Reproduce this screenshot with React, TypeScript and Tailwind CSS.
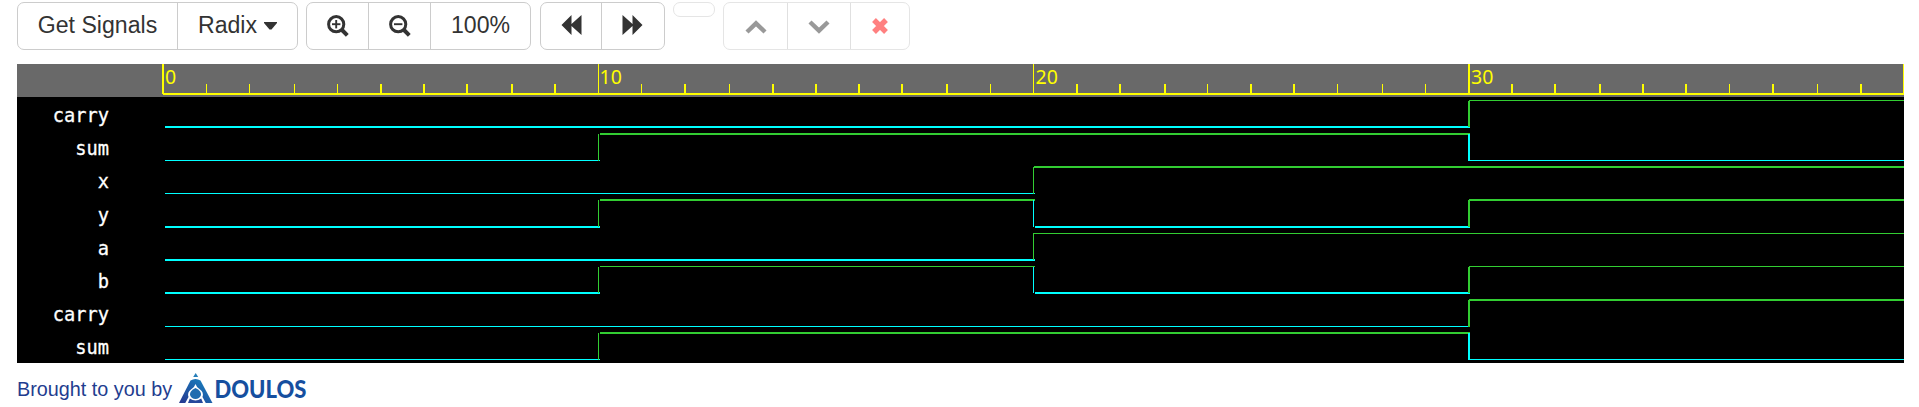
import React from "react";

const GREEN = "#32cd32";
const CYAN = "#00ffff";

type Wave = { name: string; low: [number, number]; high: [number, number]; levels: [number, number, number, number] };

const waves: Wave[] = [
  { name: "carry", low: [126, 2], high: [100, 1], levels: [0, 0, 0, 1] },
  { name: "sum", low: [160, 1], high: [133, 2], levels: [0, 1, 1, 0] },
  { name: "x", low: [193, 1], high: [166, 2], levels: [0, 0, 1, 1] },
  { name: "y", low: [226, 2], high: [199, 2], levels: [0, 1, 0, 1] },
  { name: "a", low: [259, 2], high: [233, 1], levels: [0, 0, 1, 1] },
  { name: "b", low: [292, 2], high: [266, 1], levels: [0, 1, 0, 1] },
  { name: "carry", low: [326, 1], high: [299, 2], levels: [0, 0, 0, 1] },
  { name: "sum", low: [359, 1], high: [332, 2], levels: [0, 1, 1, 0] },
];

const starts = [165, 600, 1034, 1469];
const ends = [600, 1035, 1470, 1904];
const edges: [number, number][] = [[162, 2], [598, 1], [1033, 1], [1468, 2]];

const ticks: [number, number][] = [
  [206, 1], [249, 1], [294, 1], [337, 1], [380, 2], [423, 2], [466, 2], [511, 2], [554, 2],
  [641, 1], [684, 2], [729, 1], [772, 2], [815, 2], [858, 2], [901, 2], [946, 2], [990, 1],
  [1076, 2], [1119, 2], [1164, 2], [1207, 1], [1250, 2], [1293, 2], [1337, 1], [1382, 1], [1425, 1],
  [1511, 2], [1554, 2], [1599, 2], [1642, 2], [1685, 2], [1729, 1], [1772, 2], [1817, 1], [1860, 2],
];

function Trace({ wave }: { wave: Wave }) {
  const { low, high, levels } = wave;
  return (
    <g>
      {levels.map((level, i) => {
        if (i > 0 && level === levels[i - 1]) return null;
        let last = i;
        while (last < 3 && levels[last + 1] === level) last++;
        const [y, h] = level ? high : low;
        const x = i === 2 && !level ? 1035 : i === 2 && high[1] === 1 ? 1033 : starts[i];
        const color = level ? GREEN : CYAN;
        return (
          <g key={i} fill={color}>
            <rect x={x} y={y} width={ends[last] - x} height={h} />
            {i > 0 && (
              <rect x={edges[i][0]} y={high[0] + 1} width={edges[i][1]} height={low[0] - high[0]} />
            )}
          </g>
        );
      })}
    </g>
  );
}

function Magnifier({ plus = false }: { plus?: boolean }) {
  return (
    <svg width="22" height="22" viewBox="0 0 22 22" fill="none" stroke="currentColor">
      <circle cx="9.2" cy="9.2" r="7.6" strokeWidth="3" />
      <path d="M15 15L20.3 20.3" strokeWidth="4" />
      <path d="M5 9.2H13.4" strokeWidth="1.9" />
      {plus && <path d="M9.2 5V13.4" strokeWidth="1.9" />}
    </svg>
  );
}

function Skip({ forward = false }: { forward?: boolean }) {
  return (
    <svg width="21" height="20" viewBox="0 0 21 20" fill="currentColor" className="-mt-[2px]">
      <path d={forward ? "M0.5 0L10.5 9V0L20.5 10L10.5 20V11L0.5 20Z" : "M20.5 0L10.5 9V0L0.5 10L10.5 20V11L20.5 20Z"} />
    </svg>
  );
}

function Chevron({ down = false }: { down?: boolean }) {
  return (
    <svg width="22" height="14" viewBox="0 0 22 14" fill="none" stroke="currentColor" strokeWidth="4.4" className={down ? "mt-[2px]" : "mt-px"}>
      <path d={down ? "M2 2L11 10.6L20 2" : "M2 12L11 3.4L20 12"} />
    </svg>
  );
}

function Group({ className, children }: { className: string; children: React.ReactNode }) {
  return <div className={`flex h-12 divide-x rounded-[7px] border ${className}`}>{children}</div>;
}

function Button({ className, children }: { className: string; children: React.ReactNode }) {
  return <button className={`flex h-full shrink-0 items-center justify-center ${className}`}>{children}</button>;
}

export default function App() {
  return (
    <div className="h-[407px] w-[1919px] overflow-hidden bg-white pl-[17px] pt-[2px] font-['Liberation_Sans',sans-serif] text-[23.1px] text-[#333]">
      <div className="flex h-[62px] items-start">
        <Group className="w-[281px] divide-[#ccc] border-[#ccc]">
          <Button className="w-[160px] whitespace-nowrap pb-px">Get Signals</Button>
          <Button className="w-[119px] gap-[7px] pb-px">
            Radix
            <svg width="13" height="8" viewBox="0 0 13 8" className="shrink-0"><path d="M0 0H13V1L7.5 7.5H5.5L0 1Z" fill="currentColor" /></svg>
          </Button>
        </Group>
        <Group className="ml-2 w-[225px] divide-[#ccc] border-[#ccc]">
          <Button className="w-[62px]"><Magnifier plus /></Button>
          <Button className="w-[62px]"><Magnifier /></Button>
          <Button className="w-[99px] pb-px">100%</Button>
        </Group>
        <Group className="ml-[9px] w-[125px] divide-[#ccc] border-[#ccc]">
          <Button className="w-[61px]"><Skip /></Button>
          <Button className="w-[61px]"><Skip forward /></Button>
        </Group>
        <div className="ml-2 h-[15px] w-[42px] rounded-[7px] border border-[#e5e5e5]" />
        <Group className="ml-2 w-[187px] divide-[#e0e0e0] border-[#e5e5e5]">
          <Button className="w-[64px] text-[#999]"><Chevron /></Button>
          <Button className="w-[63px] text-[#999]"><Chevron down /></Button>
          <Button className="w-[58px] text-[#ff8080]">
            <svg width="16" height="16" viewBox="0 0 16 16" stroke="currentColor" strokeWidth="5.4"><path d="M2 2L14 14M14 2L2 14" /></svg>
          </Button>
        </Group>
      </div>
      <div className="flex h-[299px] w-[1887px] bg-black">
        <div className="flex w-[145px] shrink-0 flex-col text-right font-['DejaVu_Sans_Mono',monospace] text-[18.7px] text-white [-webkit-text-stroke:0.3px_white]">
          <div className="h-[33px] shrink-0 bg-[#696969]" />
          <div className="pr-[53px] pt-[2px]">
            {waves.map((wave, i) => (
              <div key={i} className="h-[33.2px] leading-[33px]">{wave.name}</div>
            ))}
          </div>
        </div>
        <svg width="1742" height="299" viewBox="162 64 1742 299" shapeRendering="crispEdges">
          <rect x="162" y="64" width="1742" height="33" fill="#696969" />
          <g fill="#ffff00">
            {edges.map(([x, w]) => <rect key={x} x={x} y={64} width={w} height={30} />)}
            {ticks.map(([x, w]) => <rect key={x} x={x} y={84} width={w} height={9} />)}
            <rect x="163" y="93" width="1741" height="2" />
            <rect x="1903" y="64" width="1" height="30" />
            {["0", "10", "20", "30"].map((label, i) => (
              <text key={label} x={[165, 599.5, 1035.5, 1471][i]} y={84} fontFamily="Noto Sans" fontSize="19.5">{label}</text>
            ))}
          </g>
          {waves.map((wave, i) => <Trace key={i} wave={wave} />)}
        </svg>
      </div>
      <div className="flex h-11 items-start text-[#1f3d8f]">
        <span className="w-[162px] whitespace-nowrap pt-[14px] text-[19.8px] leading-6">Brought to you by</span>
        <svg width="134" height="36" viewBox="0 0 134 36" className="mt-[8px] shrink-0 overflow-visible">
          <defs>
            <linearGradient id="mark" x1="1" y1="0" x2="0" y2="1"><stop offset="0" stopColor="#1688c4" /><stop offset="1" stopColor="#25378f" /></linearGradient>
          </defs>
          <path d="M16.7 2L19.2 6H14.2Z" fill="#257eb9" />
          <path d="M11.5 9.5Q16.5 6.3 21.5 9.5L33.5 32H0Z" fill="url(#mark)" />
          <path d="M16.5 13Q17.5 16.5 21 18.5Q25 21 23.5 26L27 32.5H6L9.5 26Q8 21 12 18.5Q15.5 16.5 16.5 13Z" fill="#fff" />
          <path d="M16.5 17Q22.5 20 22 24Q20.5 28 16.5 28Q12.5 28 11 24Q10.5 20 16.5 17Z" fill="#1f6cb0" />
          <path d="M10.8 27.5Q16.5 31.5 22.2 27.5L24 32H9Z" fill="#25489b" />
          <text x="35.5" y="26.5" fill="#164f9f" fontFamily="Lato" fontWeight="900" fontSize="23.8" textLength="92" lengthAdjust="spacingAndGlyphs">DOULOS</text>
        </svg>
      </div>
    </div>
  );
}
